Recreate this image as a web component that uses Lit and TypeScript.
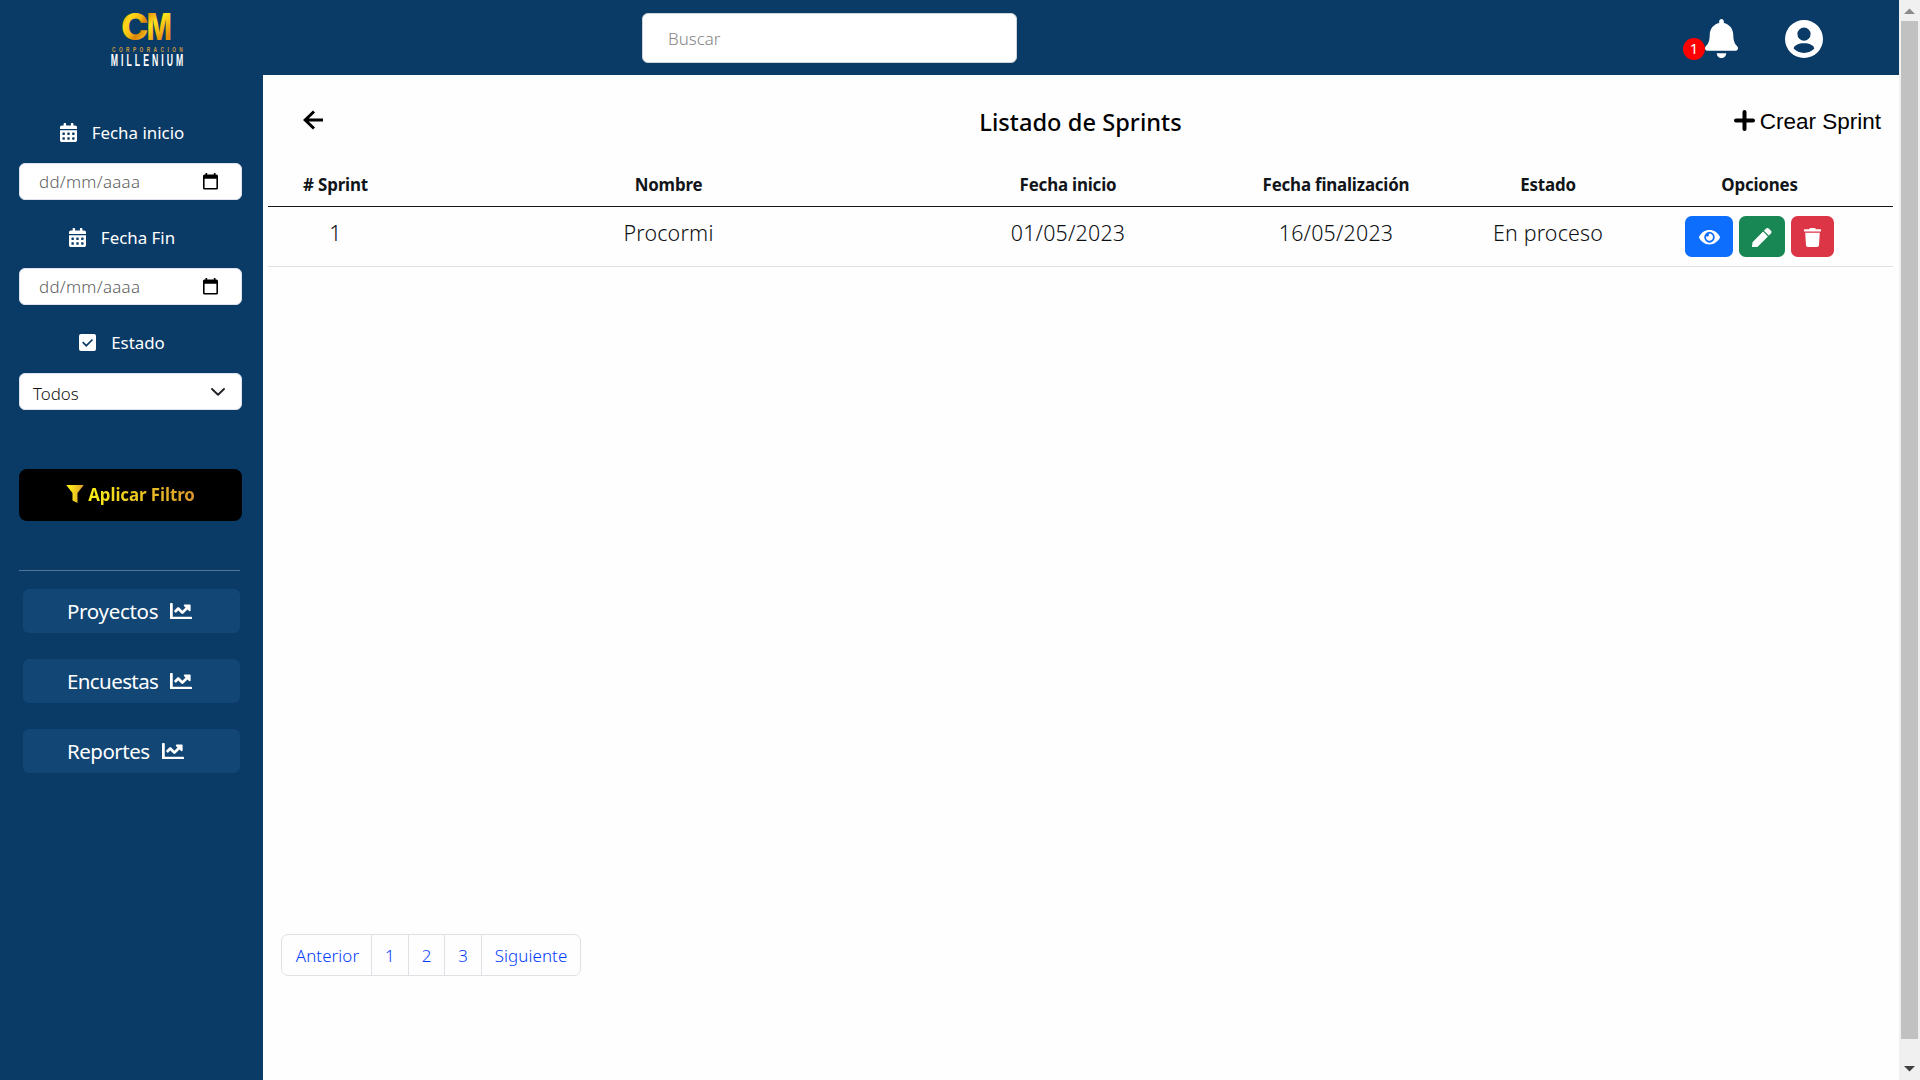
import { LitElement, html, svg, css } from "lit";
import { customElement, property } from "lit/decorators.js";

interface Glyph { box: string; d: string }

const GLYPHS: Record<string, Glyph> = {
  calendar: { box: "0 0 448 512", d: "M0 464c0 26.5 21.5 48 48 48h352c26.500 0 48-21.500 48-48V192H0zM64 268c0-6.600 5.400-12 12-12h40c6.600 0 12 5.400 12 12v40c0 6.600-5.400 12-12 12H76c-6.600 0-12-5.400-12-12zM192 268c0-6.600 5.400-12 12-12h40c6.600 0 12 5.400 12 12v40c0 6.600-5.400 12-12 12h-40c-6.600 0-12-5.400-12-12zM320 268c0-6.600 5.400-12 12-12h40c6.600 0 12 5.400 12 12v40c0 6.600-5.400 12-12 12h-40c-6.600 0-12-5.400-12-12zM64 396c0-6.600 5.400-12 12-12h40c6.600 0 12 5.400 12 12v40c0 6.600-5.400 12-12 12H76c-6.600 0-12-5.400-12-12zM192 396c0-6.600 5.400-12 12-12h40c6.600 0 12 5.400 12 12v40c0 6.600-5.400 12-12 12h-40c-6.600 0-12-5.400-12-12zM320 396c0-6.600 5.400-12 12-12h40c6.600 0 12 5.400 12 12v40c0 6.600-5.400 12-12 12h-40c-6.600 0-12-5.400-12-12zM400 64h-48V16c0-8.800-7.200-16-16-16h-32c-8.800 0-16 7.200-16 16v48H160V16c0-8.800-7.200-16-16-16h-32c-8.800 0-16 7.200-16 16v48H48C21.500 64 0 85.500 0 112v48h448v-48c0-26.500-21.500-48-48-48z" },
  chart: { box: "0 64 512 384", d: "M496 384H64V80c0-8.840-7.160-16-16-16H16C7.160 64 0 71.160 0 80v336c0 17.670 14.330 32 32 32h464c8.840 0 16-7.160 16-16v-32c0-8.840-7.160-16-16-16zM464 96H345.940c-21.380 0-32.090 25.850-16.970 40.970l32.400 32.400L288 242.750l-73.370-73.370c-12.500-12.500-32.760-12.500-45.250 0l-68.690 68.690c-6.250 6.250-6.250 16.380 0 22.630l22.620 22.620c6.250 6.250 16.380 6.250 22.630 0L192 237.250l73.370 73.370c12.500 12.500 32.760 12.500 45.250 0l96-96 32.400 32.400c15.120 15.120 40.970 4.410 40.970-16.970V112c.01-8.840-7.150-16-15.990-16z" },
  bell: { box: "0 0 448 512", d: "M224 512c35.320 0 63.970-28.650 63.970-64H160.030c0 35.350 28.650 64 63.970 64zm215.390-149.710c-19.320-20.760-55.470-51.990-55.470-154.290 0-77.700-54.480-139.900-127.940-155.160V32c0-17.670-14.320-32-31.980-32s-31.980 14.330-31.980 32v20.840C118.560 68.100 64.080 130.300 64.080 208c0 102.300-36.150 133.530-55.470 154.290-6 6.450-8.660 14.160-8.610 21.710.11 16.400 12.980 32 32.100 32h383.800c19.120 0 32-15.600 32.100-32 .05-7.550-2.610-15.270-8.610-21.710z" },
  user: { box: "0 0 38 38", d: "M19 0a19 19 0 1 0 0 38a19 19 0 0 0 0-38zM19 7.500a6.600 6.600 0 1 1 0 13.200a6.600 6.600 0 0 1 0-13.200zM19 33c-4.300 0-8-1.700-10.300-4.400c.3-3.400 5-5.400 10.300-5.400s10 2 10.300 5.400C27 31.300 23.300 33 19 33z" },
  eye: { box: "0 64 576 384", d: "M572.520 241.400C518.290 135.590 410.930 64 288 64S57.680 135.640 3.480 241.410a32.350 32.350 0 0 0 0 29.190C57.710 376.410 165.070 448 288 448s230.320-71.640 284.520-177.410a32.350 32.350 0 0 0 0-29.190zM288 400a144 144 0 1 1 144-144 143.930 143.930 0 0 1-144 144zm0-240a95.310 95.310 0 0 0-25.310 3.790 47.850 47.850 0 0 1-66.900 66.900A95.780 95.780 0 1 0 288 160z" },
  pen: { box: "0 0 512 512", d: "M290.740 93.240l128.020 128.020-277.990 277.990-114.140 12.600C11.350 513.540-1.560 500.620.14 485.340l12.700-114.220 277.900-277.880zm207.200-19.060l-60.110-60.110c-18.750-18.750-49.160-18.750-67.910 0l-56.550 56.550 128.020 128.020 56.550-56.550c18.750-18.760 18.750-49.160 0-67.910z" },
  trash: { box: "0 0 448 512", d: "M432 32H312l-9.400-18.700A24 24 0 0 0 281.100 0H166.800a23.720 23.720 0 0 0-21.400 13.300L136 32H16A16 16 0 0 0 0 48v32a16 16 0 0 0 16 16h416a16 16 0 0 0 16-16V48a16 16 0 0 0-16-16zM32 128l21.200 339a48 48 0 0 0 47.900 45h245.800a48 48 0 0 0 47.900-45L416 128z" },
  check: { box: "0 0 17 17", d: "M2 0h13a2 2 0 0 1 2 2v13a2 2 0 0 1-2 2H2a2 2 0 0 1-2-2V2a2 2 0 0 1 2-2zM12.900 4.900L7.300 10.500L4.300 7.500L3.100 8.700L7.300 12.900L14.100 6.100z" },
  picker: { box: "0 0 15 16.500", d: "M2.500 0h1.700v1.500h6.600V0h1.700v1.500H13.500A1.500 1.500 0 0 1 15 3v12a1.500 1.500 0 0 1-1.500 1.500h-12A1.500 1.500 0 0 1 0 15V3a1.500 1.500 0 0 1 1.500-1.500h1zM1.600 5.800v9.100h11.800V5.800z" },
};

@customElement("ui-icon")
export class UiIcon extends LitElement {
  static styles = css`
    :host { display: block; flex: none; }
    svg { display: block; width: 100%; height: 100%; fill: currentColor; fill-rule: evenodd; }
  `;
  @property() name = "";
  render() {
    const g = GLYPHS[this.name];
    return html`<svg viewBox=${g.box} preserveAspectRatio="none">${svg`<path d=${g.d} />`}</svg>`;
  }
}

const COLUMNS = ["# Sprint", "Nombre", "Fecha inicio", "Fecha finalización", "Estado", "Opciones"];
const SPRINTS = [["1", "Procormi", "01/05/2023", "16/05/2023", "En proceso"]];

@customElement("app-root")
export class AppRoot extends LitElement {
  static styles = css`
    :host {
      display: block;
      width: 1920px;
      height: 1080px;
      overflow: hidden;
      font-family: "Noto Sans", "Open Sans", sans-serif;
      font-size: 16.9px;
      color: #212529;
    }
    * { box-sizing: border-box; }
    .window { display: flex; height: 1080px; }
    .page { width: 1899px; display: flex; flex-direction: column; }

    .topbar { height: 75px; background: #0a3a66; display: flex; align-items: center; color: #fff; flex: none; }
    .logo { width: 80px; height: 75px; margin-left: 107px; display: block; align-self: flex-start; }
    .search {
      width: 375px; height: 50px; margin-left: 455px; padding: 1px 0 0 25px;
      display: flex; align-items: center; background: #fff; border: 1px solid #ced4da;
      border-radius: 6px; color: #858585; font-weight: 300;
    }
    .alerts { margin-left: 666px; display: flex; }
    .count {
      width: 22px; height: 22px; margin-top: 19px; border-radius: 50%; background: #f00;
      display: grid; place-items: center; font-size: 15px; line-height: 1;
    }
    .bell { width: 33px; height: 39px; }
    .user { width: 38px; height: 38px; margin-left: 47px; margin-top: 2px; }
    .alerts { margin-top: 3px; }

    .body { flex: 1; display: flex; }
    .sidebar { width: 263px; background: #0a3a66; padding: 39px 23px 0 19px; color: #fff; }
    .field { margin-bottom: 20px; width: 223px; }
    .label {
      height: 36px; margin-bottom: 13px; padding-right: 17px;
      display: flex; align-items: center; justify-content: center; gap: 15px;
    }
    .field + .field .label { margin-top: -1px; }
    .label ui-icon { width: 17px; height: 19px; }
    .label .square { width: 17px; height: 17px; }
    .control {
      width: 223px; height: 37px; display: flex; align-items: center; justify-content: space-between;
      background: #fff; border: 1px solid #dde2ee; border-radius: 6px; font-weight: 300;
    }
    .date { padding: 0 23px 0 19px; color: #5f5f5f; letter-spacing: 0.29px; }
    .date ui-icon { width: 15px; height: 16.500px; color: #000; }
    .select { padding: 0 16px 0 13px; color: #111; }
    .select span { padding-top: 4px; }
    .select svg { width: 14px; height: 8px; }
    .apply {
      width: 223px; height: 52px; margin-top: 59px; border-radius: 8px; background: #000;
      display: flex; align-items: center; justify-content: center; gap: 4px;
      font-weight: 700; letter-spacing: -0.08px;
    }
    .apply svg { width: 18px; height: 18px; margin-top: -2px; }
    .apply span { margin-top: -1px; }
    .gold { background: linear-gradient(90deg, #fcf016, #d9962f); background-clip: text; -webkit-background-clip: text; color: transparent; }
    .rule { height: 1px; width: 221px; background: #54759a; margin: 49px 0 18px; }
    .nav { display: flex; flex-direction: column; gap: 26px; padding-left: 4px; }
    .link {
      width: 217px; height: 44px; border-radius: 6px; background: #124675; padding-left: 44px;
      display: flex; align-items: center; gap: 12px; font-size: 20.500px; letter-spacing: -0.3px;
    }
    .link:nth-child(2) { letter-spacing: -0.6px; }
    .link:nth-child(3) { letter-spacing: -0.5px; }
    .link ui-icon { width: 22px; height: 16.500px; }

    .main { flex: 1; background: #fefefe; padding: 0 6px 0 5px; display: flex; flex-direction: column; }
    .heading { height: 87px; display: grid; grid-template-columns: 1fr auto 1fr; align-items: center; color: #000; }
    .back { width: 20px; height: 20px; margin: 3px 0 0 35px; display: block; }
    .title { font-size: 23.600px; font-weight: 500; letter-spacing: 0.04px; padding-top: 7px; }
    .create {
      justify-self: end; display: flex; align-items: center; gap: 5px; padding: 6px 12px 0 0;
      font: 22.500px "Liberation Sans", Arial, sans-serif;
    }
    .create svg { width: 21px; height: 21px; margin-top: -2px; }
    .row { display: grid; grid-template-columns: 135px 531px 268px 268px 156px 267px; justify-items: center; }
    .head { height: 45px; border-bottom: 1px solid #16191c; align-items: center; font-weight: 700; letter-spacing: -0.18px; color: #111519; }
    .data { height: 60px; border-bottom: 1px solid #dee2e6; font-size: 21.400px; font-weight: 300; line-height: 30px; padding-top: 9px; letter-spacing: 0.2px; color: #0c0f12; }
    .cell { padding-top: 2px; }
    .actions { display: flex; gap: 6px; }
    .btn { height: 41px; border-radius: 6.600px; color: #fff; display: grid; place-items: center; padding-top: 2px; }
    .view { width: 48px; background: #0d6efd; }
    .view ui-icon { width: 21px; height: 14.500px; }
    .edit { width: 46px; background: #198754; }
    .edit ui-icon { width: 19.500px; height: 19.500px; }
    .drop { width: 43px; background: #dc3545; }
    .drop ui-icon { width: 17px; height: 19px; }
    .pager {
      display: flex; width: 300px; height: 42px; margin: 667px 0 0 13px;
      border: 1px solid #dee2e6; border-radius: 7px; color: #003cff; font-weight: 300; overflow: hidden;
    }
    .pager span { display: grid; place-items: center; border-left: 1px solid #dee2e6; width: 36.700px; letter-spacing: 0.1px; }
    .pager .prev { width: 89px; border-left: 0; padding-left: 2px; }
    .pager .next { flex: 1; }

    .scrollbar { width: 21px; background: #f0f0f0; display: flex; flex-direction: column; align-items: center; }
    .scrollbar svg { width: 11px; height: 6px; margin: 8px 0 7px; }
    .thumb { width: 17px; height: 1018px; background: #c1c1c1; }
    .scrollbar .down { margin: 27px 0 0; }
  `;

  private logo() {
    return html`<svg class="logo" viewBox="107 0 80 75">
      <defs>
        <linearGradient id="c" x1="0" y1="0" x2="1" y2="1">
          <stop offset=".1" stop-color="#d98a0c" /><stop offset=".3" stop-color="#ffd91a" />
          <stop offset=".5" stop-color="#f5b80f" /><stop offset=".62" stop-color="#d98208" /><stop offset=".9" stop-color="#ffe01e" />
        </linearGradient>
        <linearGradient id="m" x1="0" y1="0" x2=".4" y2="1">
          <stop offset=".2" stop-color="#e8950c" /><stop offset=".45" stop-color="#ffe21c" /><stop offset=".9" stop-color="#e58e0a" />
        </linearGradient>
      </defs>
      <g font-family="Inter" font-weight="800" font-size="36.500">
        <text x="121" y="40" textLength="27.500" lengthAdjust="spacingAndGlyphs" fill="url(#c)">C</text>
        <text x="146.800" y="40" textLength="25" lengthAdjust="spacingAndGlyphs" fill="url(#m)">M</text>
      </g>
      <g font-family="Liberation Sans" font-weight="700">
        <text transform="translate(112 51.700) scale(.6 1)" font-size="8" textLength="118" fill="#cf9a38">CORPORACION</text>
        <text transform="translate(110.700 65.600) scale(.55 1)" font-size="15.800" textLength="132" fill="#fff">MILLENIUM</text>
      </g>
    </svg>`;
  }

  private dateField(label: string) {
    return html`<div class="field">
      <div class="label"><ui-icon name="calendar"></ui-icon><span>${label}</span></div>
      <div class="control date"><span>dd/mm/aaaa</span><ui-icon name="picker"></ui-icon></div>
    </div>`;
  }

  render() {
    return html`<div class="window">
      <div class="page">
        <header class="topbar">
          ${this.logo()}
          <div class="search">Buscar</div>
          <div class="alerts"><span class="count">1</span><ui-icon class="bell" name="bell"></ui-icon></div>
          <ui-icon class="user" name="user"></ui-icon>
        </header>
        <div class="body">
          <aside class="sidebar">
            ${this.dateField("Fecha inicio")}
            ${this.dateField("Fecha Fin")}
            <div class="field">
              <div class="label"><ui-icon class="square" name="check"></ui-icon><span>Estado</span></div>
              <div class="control select"><span>Todos</span>
                <svg viewBox="0 0 14 8"><path d="M1 1l6 5.800L13 1" fill="none" stroke="#212529" stroke-width="1.900" stroke-linecap="round" stroke-linejoin="round" /></svg>
              </div>
            </div>
            <div class="apply">
              <svg viewBox="0 0 18 18">
                <defs><linearGradient id="f"><stop offset=".2" stop-color="#fbea17" /><stop offset="1" stop-color="#dc9a2e" /></linearGradient></defs>
                <path d="M.2 0h17.600L11.500 8v10L6.500 15.500V8z" fill="url(#f)" />
              </svg>
              <span class="gold">Aplicar Filtro</span>
            </div>
            <div class="rule"></div>
            <nav class="nav">
              ${["Proyectos", "Encuestas", "Reportes"].map((t) => html`<div class="link"><span>${t}</span><ui-icon name="chart"></ui-icon></div>`)}
            </nav>
          </aside>
          <main class="main">
            <div class="heading">
              <svg class="back" viewBox="0 0 20 20"><path d="M11 1.500L2.200 10L11 18.500M2.500 10H20" fill="none" stroke="#000" stroke-width="3" /></svg>
              <div class="title">Listado de Sprints</div>
              <div class="create">
                <svg viewBox="0 0 21 21"><path d="M10.500 2v17M2 10.500h17" stroke="#000" stroke-width="4" stroke-linecap="round" /></svg>
                <span>Crear Sprint</span>
              </div>
            </div>
            <div class="row head">${COLUMNS.map((c) => html`<div>${c}</div>`)}</div>
            ${SPRINTS.map((r) => html`<div class="row data">
              ${r.map((v) => html`<div class="cell">${v}</div>`)}
              <div class="actions">
                <div class="btn view"><ui-icon name="eye"></ui-icon></div>
                <div class="btn edit"><ui-icon name="pen"></ui-icon></div>
                <div class="btn drop"><ui-icon name="trash"></ui-icon></div>
              </div>
            </div>`)}
            <div class="pager">
              <span class="prev">Anterior</span><span>1</span><span>2</span><span>3</span><span class="next">Siguiente</span>
            </div>
          </main>
        </div>
      </div>
      <div class="scrollbar">
        <svg viewBox="0 0 11 6"><path d="M0 6L5.500 .5L11 6z" fill="#8b8b8b" /></svg>
        <div class="thumb"></div>
        <svg class="down" viewBox="0 0 11 6"><path d="M0 0L5.500 5.500L11 0z" fill="#404040" /></svg>
      </div>
    </div>`;
  }
}
